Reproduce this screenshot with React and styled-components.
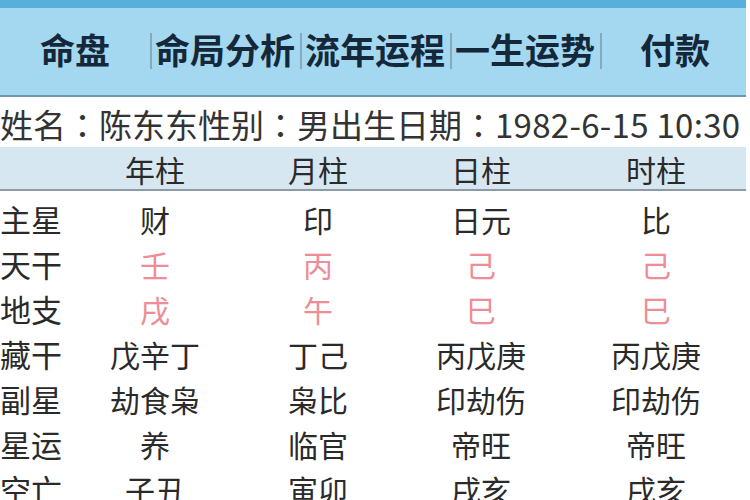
import React from "react";
import styled, { createGlobalStyle } from "styled-components";

const GlobalStyle = createGlobalStyle`
  html, body {
    margin: 0;
    padding: 0;
    background: #ffffff;
  }
  body {
    font-family: "Noto Sans CJK SC", "Noto Sans", sans-serif;
    color: #2b2b2b;
  }
`;

const Page = styled.div`
  width: 750px;
  height: 500px;
  overflow: hidden;
  background: #ffffff;
  display: flex;
  flex-direction: column;
  & > * {
    flex-shrink: 0;
  }
`;

const NavBar = styled.nav`
  display: grid;
  grid-template-columns: repeat(5, 150px);
  height: 87px;
  width: 746px;
  background: #a3d8f0;
  border-top: 8px solid #58afdc;
  border-bottom: 2px solid #6c98ac;
`;

const NavItem = styled.div`
  position: relative;
  display: flex;
  align-items: center;
  justify-content: center;
  padding-bottom: 6px;
  font-size: 35px;
  font-weight: 700;
  color: #15283a;
  white-space: nowrap;

  &::before {
    content: "";
    display: ${(p) => (p.$sep ? "block" : "none")};
    position: absolute;
    left: 0;
    top: 25px;
    height: 36px;
    width: 2px;
    background: #86aabd;
  }
`;

const InfoRow = styled.div`
  height: 50px;
  display: flex;
  align-items: center;
  padding-top: 3px;
  box-sizing: border-box;
  font-size: 33px;
  color: #333333;
  white-space: nowrap;
  overflow: hidden;
`;

const Colon = styled.span`
  font-family: "Noto Sans CJK TC", "Noto Sans CJK SC", sans-serif;
`;

const Digits = styled.span`
  letter-spacing: 0.3px;
`;

const grid = `
  display: grid;
  grid-template-columns: 74px 162px 164px 162px 188px;
  align-items: center;
`;

const HeadRow = styled.div`
  ${grid}
  height: 42px;
  width: 746px;
  background: #d7e7f2;
  border-bottom: 2px solid #8d9ba6;
  font-size: 30px;
  color: #223344;
`;

const Body = styled.div`
  padding-top: 5px;
  display: flex;
  flex-direction: column;
`;

const Row = styled.div`
  ${grid}
  height: 45px;
  flex-shrink: 0;
`;

const Label = styled.div`
  font-size: 31px;
  color: #2a2a2a;
  white-space: nowrap;
`;

const Cell = styled.div`
  text-align: center;
  font-size: 30px;
  color: ${(p) => (p.$red ? "#ee8d95" : "#2a2a2a")};
  white-space: nowrap;
`;

const navItems = ["命盘", "命局分析", "流年运程", "一生运势", "付款"];
const pillars = ["年柱", "月柱", "日柱", "时柱"];
const rows = [
  { label: "主星", cells: ["财", "印", "日元", "比"] },
  { label: "天干", cells: ["壬", "丙", "己", "己"], red: true },
  { label: "地支", cells: ["戌", "午", "巳", "巳"], red: true },
  { label: "藏干", cells: ["戊辛丁", "丁己", "丙戊庚", "丙戊庚"] },
  { label: "副星", cells: ["劫食枭", "枭比", "印劫伤", "印劫伤"] },
  { label: "星运", cells: ["养", "临官", "帝旺", "帝旺"] },
  { label: "空亡", cells: ["子丑", "寅卯", "戌亥", "戌亥"] },
];

export default function App() {
  return (
    <>
      <GlobalStyle />
      <Page>
        <NavBar>
          {navItems.map((t, i) => (
            <NavItem key={t} $sep={i > 0}>
              {t}
            </NavItem>
          ))}
        </NavBar>
        <InfoRow>
          姓名<Colon>：</Colon>陈东东性别<Colon>：</Colon>男出生日期<Colon>：</Colon>
          <Digits>1982-6-15 10:30</Digits>
        </InfoRow>
        <HeadRow>
          <div />
          {pillars.map((p) => (
            <Cell key={p}>{p}</Cell>
          ))}
        </HeadRow>
        <Body>
          {rows.map((r) => (
            <Row key={r.label}>
              <Label>{r.label}</Label>
              {r.cells.map((c, i) => (
                <Cell key={i} $red={r.red}>
                  {c}
                </Cell>
              ))}
            </Row>
          ))}
        </Body>
      </Page>
    </>
  );
}
